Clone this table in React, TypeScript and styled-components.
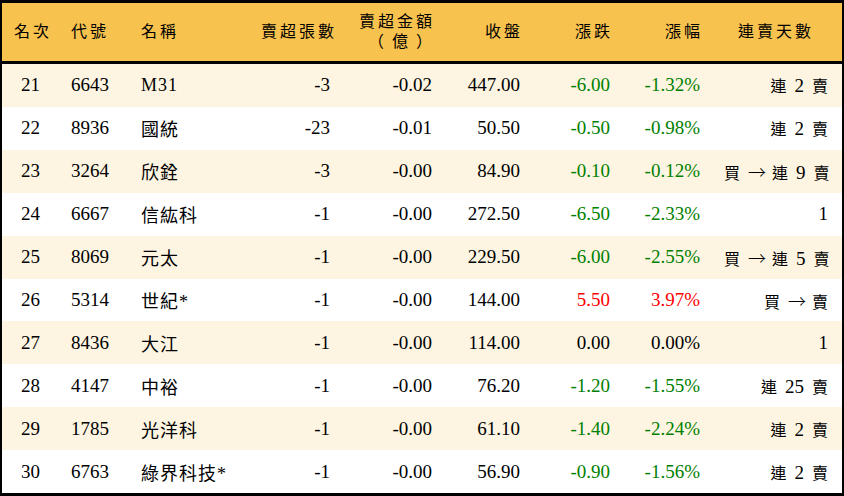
import React from 'react';
import styled, { createGlobalStyle } from 'styled-components';

const GlobalStyle = createGlobalStyle`
  html, body {
    margin: 0;
    padding: 0;
    background: #ffffff;
  }
`;

const COLUMNS = '57px 70px 120px 93px 102px 88px 90px 90px 128px';

const Board = styled.div`
  box-sizing: border-box;
  width: 844px;
  height: 496px;
  border-style: solid;
  border-color: #000000;
  border-width: 3px 2px 3px 2px;
  display: flex;
  flex-direction: column;
  font-family: 'Liberation Serif', 'Noto Sans CJK TC', serif;
  color: #000000;
`;

const Header = styled.div`
  display: grid;
  grid-template-columns: ${COLUMNS};
  height: 58px;
  background: #f8c24e;
  border-bottom: 3px solid #000000;
  align-items: center;
  font-size: 16px;
  letter-spacing: 3px;
`;

type AlignProps = { $align: 'left' | 'right' | 'center' };

const HeadCell = styled.div<AlignProps>`
  padding: 0 ${({ $align }) => ($align === 'right' ? 9 : 12)}px 0 12px;
  text-align: ${({ $align }) => $align};
  line-height: 20px;
  white-space: nowrap;
`;

const Unit = styled.span`
  display: inline-block;
  letter-spacing: 8px;
  margin-right: -5px;
`;

const Body = styled.div`
  flex: 1;
  display: grid;
  grid-auto-rows: 1fr;
`;

const Row = styled.div<{ $shaded: boolean }>`
  display: grid;
  grid-template-columns: ${COLUMNS};
  align-items: center;
  background: ${({ $shaded }) => ($shaded ? '#fdf5e2' : '#ffffff')};
  font-size: 19px;
`;

const Cell = styled.div<AlignProps & { $tone?: 'up' | 'down' | 'flat' }>`
  padding: 0 12px;
  text-align: ${({ $align }) => $align};
  white-space: nowrap;
  color: ${({ $tone }) => ($tone === 'up' ? '#ff0000' : $tone === 'down' ? '#008000' : '#000000')};
`;

const NameCell = styled(Cell)`
  font-size: 18px;
  letter-spacing: 1px;
`;

const StreakCell = styled(Cell)`
  padding-right: 10px;
  font-size: 16px;
  letter-spacing: 2px;
`;

const Num = styled.span`
  font-size: 19px;
  letter-spacing: 0;
  margin-right: 2px;
`;

const Arrow = styled.span`
  font-family: 'Noto Sans CJK TC', sans-serif;
  font-size: 18px;
  font-weight: 300;
  letter-spacing: 0;
`;

type Item = {
  rank: number;
  code: string;
  name: string;
  lots: string;
  amount: string;
  close: string;
  change: string;
  pct: string;
  // null days = single day; fromBuy = switched from buying
  days: number | null;
  fromBuy: boolean;
};

const ITEMS: Item[] = [
  { rank: 21, code: '6643', name: 'M31', lots: '-3', amount: '-0.02', close: '447.00', change: '-6.00', pct: '-1.32%', days: 2, fromBuy: false },
  { rank: 22, code: '8936', name: '國統', lots: '-23', amount: '-0.01', close: '50.50', change: '-0.50', pct: '-0.98%', days: 2, fromBuy: false },
  { rank: 23, code: '3264', name: '欣銓', lots: '-3', amount: '-0.00', close: '84.90', change: '-0.10', pct: '-0.12%', days: 9, fromBuy: true },
  { rank: 24, code: '6667', name: '信紘科', lots: '-1', amount: '-0.00', close: '272.50', change: '-6.50', pct: '-2.33%', days: null, fromBuy: false },
  { rank: 25, code: '8069', name: '元太', lots: '-1', amount: '-0.00', close: '229.50', change: '-6.00', pct: '-2.55%', days: 5, fromBuy: true },
  { rank: 26, code: '5314', name: '世紀*', lots: '-1', amount: '-0.00', close: '144.00', change: '5.50', pct: '3.97%', days: 1, fromBuy: true },
  { rank: 27, code: '8436', name: '大江', lots: '-1', amount: '-0.00', close: '114.00', change: '0.00', pct: '0.00%', days: null, fromBuy: false },
  { rank: 28, code: '4147', name: '中裕', lots: '-1', amount: '-0.00', close: '76.20', change: '-1.20', pct: '-1.55%', days: 25, fromBuy: false },
  { rank: 29, code: '1785', name: '光洋科', lots: '-1', amount: '-0.00', close: '61.10', change: '-1.40', pct: '-2.24%', days: 2, fromBuy: false },
  { rank: 30, code: '6763', name: '綠界科技*', lots: '-1', amount: '-0.00', close: '56.90', change: '-0.90', pct: '-1.56%', days: 2, fromBuy: false },
];

const toneOf = (change: string) => {
  const n = parseFloat(change);
  if (n > 0) return 'up';
  if (n < 0) return 'down';
  return 'flat';
};

const Streak = ({ days, fromBuy }: { days: number | null; fromBuy: boolean }) => {
  if (days === null) return <Num>1</Num>;
  return (
    <>
      {fromBuy && (
        <>
          買 <Arrow>→</Arrow>{' '}
        </>
      )}
      {days > 1 ? (
        <>
          連 <Num>{days}</Num> 賣
        </>
      ) : (
        '賣'
      )}
    </>
  );
};

const App = () => (
  <>
    <GlobalStyle />
    <Board>
      <Header>
        <HeadCell $align="center">名次</HeadCell>
        <HeadCell $align="left">代號</HeadCell>
        <HeadCell $align="left">名稱</HeadCell>
        <HeadCell $align="right">賣超張數</HeadCell>
        <HeadCell $align="right">
          賣超金額
          <br />
          <Unit>（億）</Unit>
        </HeadCell>
        <HeadCell $align="right">收盤</HeadCell>
        <HeadCell $align="right">漲跌</HeadCell>
        <HeadCell $align="right">漲幅</HeadCell>
        <HeadCell $align="center">連賣天數</HeadCell>
      </Header>
      <Body>
        {ITEMS.map((item, i) => {
          const tone = toneOf(item.change);
          return (
            <Row key={item.rank} $shaded={i % 2 === 0}>
              <Cell $align="center">{item.rank}</Cell>
              <Cell $align="left">{item.code}</Cell>
              <NameCell $align="left">{item.name}</NameCell>
              <Cell $align="right">{item.lots}</Cell>
              <Cell $align="right">{item.amount}</Cell>
              <Cell $align="right">{item.close}</Cell>
              <Cell $align="right" $tone={tone}>{item.change}</Cell>
              <Cell $align="right" $tone={tone}>{item.pct}</Cell>
              <StreakCell $align="right">
                <Streak days={item.days} fromBuy={item.fromBuy} />
              </StreakCell>
            </Row>
          );
        })}
      </Body>
    </Board>
  </>
);

export default App;
